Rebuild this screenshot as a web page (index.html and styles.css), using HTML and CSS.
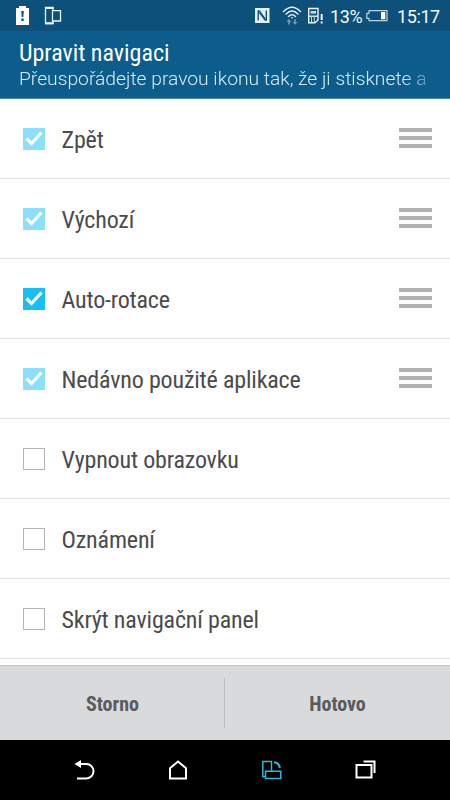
FILE: index.html
```html
<!DOCTYPE html>
<html lang="cs">
<head>
<meta charset="utf-8">
<title>Upravit navigaci</title>
<link rel="stylesheet" href="styles.css">
</head>
<body>
<div class="screen">
  <div class="status">
    <svg class="status-left" width="70" height="31" viewBox="0 0 70 31">
      <path fill="#fff" d="M16 8h3V6h7v2h3v17H16z"/>
      <path fill="#0d5079" d="M21.200 11h2.600l-.5 6h-1.600zM21.300 18.500h2.400V21h-2.400z"/>
      <path fill="none" stroke="#eaf4fa" stroke-width="1.300" d="M53 10.500V7.500h-7.500v16h7.500v-2.500M52.500 10.700h8V21h-8z"/>
      <path stroke="#eaf4fa" stroke-width="2" d="M45 8h8.500M45 23.200h8.500"/>
    </svg>
    <svg class="status-right" width="75" height="31" viewBox="0 0 75 31">
      <path fill="#e5f0f6" d="M0 8h14.500v15H0z"/>
      <path fill="none" stroke="#0d5079" stroke-width="1.400" d="M3.200 20.500V11.500q0-1.500 1.300-.3L10 19M11.300 10.500v9q0 1.500-1.300.3L4.500 12.500"/>
      <g fill="none" stroke="#e4f0f6" stroke-width="1.500" stroke-linecap="round">
        <path d="M28.500 11.500Q37 3 45.500 11.500M31 14Q37 8 43 14M33.500 16.500Q37 13 40.500 16.500"/>
      </g>
      <path fill="#e4f0f6" d="M35.500 17.300h3L37 18.800z"/>
      <path fill="#6f9fbd" d="M34 19l2.500 2.800h-1.700V24.500h-1.600v-2.700h-1.700zM40 24.800L37.500 22h1.700v-2.700h1.600V22h1.700z"/>
      <path fill="none" stroke="#edf5fa" stroke-width="1.400" d="M53.700 8.500h9.300V20l-3 2.700h-6.300z"/>
      <path stroke="#c4dae7" stroke-width="2.600" d="M55.600 12.300h5.500"/>
      <path stroke="#edf5fa" stroke-width="1.300" d="M53.700 16.200h9.300"/>
      <path stroke="#b9d2e1" stroke-width="1" d="M56.500 17v5M59.300 17v5"/>
      <path fill="#fff" d="M65.700 14h1.900v6h-1.900zM65.700 21.500h1.900v2h-1.900z"/>
    </svg>
    <span class="percent">13%</span>
    <svg class="battery" width="22" height="31" viewBox="0 0 22 31">
      <path fill="none" stroke="#b9d2e1" stroke-width="1.200" d="M3 10.600h18v10H3v-2.300H.8v-5H3z"/>
      <path fill="#fff" d="M15 12h4.300v7.300H15z"/>
    </svg>
    <span class="clock">15:17</span>
  </div>
  <header class="header">
    <h1 class="title">Upravit navigaci</h1>
    <p class="subtitle">Přeuspořádejte pravou ikonu tak, že ji stisknete a</p>
  </header>
  <main class="list">
    <div class="row"><span class="box soft"><svg viewBox="0 0 22 22"><path d="M3.500 10.500l5 5L18.500 4.500"/></svg></span><span class="label">Zpět</span><span class="grip"><i></i><i></i><i></i></span></div>
    <div class="row"><span class="box soft"><svg viewBox="0 0 22 22"><path d="M3.500 10.500l5 5L18.500 4.500"/></svg></span><span class="label">Výchozí</span><span class="grip"><i></i><i></i><i></i></span></div>
    <div class="row"><span class="box on"><svg viewBox="0 0 22 22"><path d="M3.500 10.500l5 5L18.500 4.500"/></svg></span><span class="label">Auto-rotace</span><span class="grip"><i></i><i></i><i></i></span></div>
    <div class="row"><span class="box soft"><svg viewBox="0 0 22 22"><path d="M3.500 10.500l5 5L18.500 4.500"/></svg></span><span class="label">Nedávno použité aplikace</span><span class="grip"><i></i><i></i><i></i></span></div>
    <div class="row"><span class="box"></span><span class="label">Vypnout obrazovku</span></div>
    <div class="row"><span class="box"></span><span class="label">Oznámení</span></div>
    <div class="row"><span class="box"></span><span class="label">Skrýt navigační panel</span></div>
  </main>
  <div class="actions">
    <div class="action cancel">Storno</div>
    <div class="divider"></div>
    <div class="action done">Hotovo</div>
  </div>
  <nav class="nav">
    <svg width="24" height="24" viewBox="0 0 24 24"><path fill="none" stroke="#fff" stroke-width="2" d="M5 6h9.500a7 7.200 0 0 1 0 14.400H5"/><path fill="#fff" d="M2.500 6L9 2v8z"/></svg>
    <svg width="24" height="24" viewBox="0 0 24 24"><path fill="none" stroke="#fff" stroke-width="2" d="M4 10.200l8-6.700 8 6.700V20.500H4z"/></svg>
    <svg width="24" height="24" viewBox="0 0 24 24"><g fill="none" stroke="#35b3dc" stroke-width="1.500"><path d="M5.500 18.500H2.800V3.500h8.700V13M5.500 13.200h15.300v7.300H5.500z"/><path stroke-width="2" d="M14 4.200q5.300.5 5.800 6"/></g></svg>
    <svg width="24" height="24" viewBox="0 0 24 24"><path fill="none" stroke="#fff" stroke-width="2" d="M2.500 7H17.500v12.500H2.500zM9.500 3.500H20.500V15"/></svg>
  </nav>
</div>
</body>
</html>
```
FILE: styles.css
```css
* { box-sizing: border-box; }
body { margin: 0; background: #000; font-family: "Roboto Condensed", Roboto, sans-serif; font-stretch: 75%; }
.screen { width: 450px; height: 800px; display: flex; flex-direction: column; overflow: hidden; background: #fefefe; }
svg { display: block; flex: none; }
.status { height: 31px; flex: none; display: flex; background: #0d5079; color: #f2f8fb; font-family: Roboto, sans-serif; font-stretch: 100%; font-size: 18px; line-height: 33px; white-space: nowrap; }
.status-right { margin-left: 185px; }
.percent { width: 35px; letter-spacing: -.4px; }
.battery { margin-left: 1px; margin-right: 9px; }
.clock { letter-spacing: -.4px; }
.header { height: 68px; flex: none; padding: 8px 18px 0 19px; background: #0d5d8c; color: #fff; border-bottom: 1px solid #4d83a5; }
.title { margin: 0; font-size: 24px; line-height: 28px; font-weight: 400; white-space: nowrap; }
.subtitle { margin: 0; width: 412px; font-family: Roboto, sans-serif; font-stretch: 100%; font-weight: 300; font-size: 19.250px; line-height: 24px; white-space: nowrap; color: #d7eaf5; -webkit-mask-image: linear-gradient(90deg, #000 93%, transparent 103%); mask-image: linear-gradient(90deg, #000 93%, transparent 103%); }
.list { flex: 1; min-height: 0; overflow: hidden; }
.row { height: 80px; display: flex; align-items: center; padding: 0 18px 0 23px; border-bottom: 1px solid #e1e1e2; }
.box { width: 22px; height: 22px; flex: none; border: 1px solid #b4b4b5; }
.box.soft { background: #8ae0fa; border: 0; }
.box.on { background: #18bff5; border: 0; }
.box path { fill: none; stroke: #fff; stroke-width: 3.200; }
.label { margin-left: 16.500px; font-size: 24px; letter-spacing: -.17px; line-height: 30px; padding-top: 2px; color: #4b4b4c; white-space: nowrap; }
.grip { margin-left: auto; margin-bottom: 2px; width: 33px; display: grid; gap: 4px; }
.grip i { height: 4px; background: #b1b1b1; }
.actions { height: 75px; flex: none; display: grid; grid-template-columns: 224px 1px 1fr; align-items: center; background: #d9dadc; border-top: 1px solid #c3c4c6; }
.action { text-align: center; font-weight: 700; font-size: 20px; line-height: 24px; padding-top: 2px; color: #5b5b5d; }
.cancel { padding-left: 1px; }
.divider { width: 1px; height: 50px; background: #bdbebf; }
.nav { height: 60px; flex: none; background: #000; display: flex; justify-content: center; align-items: center; gap: 70px; }
```
